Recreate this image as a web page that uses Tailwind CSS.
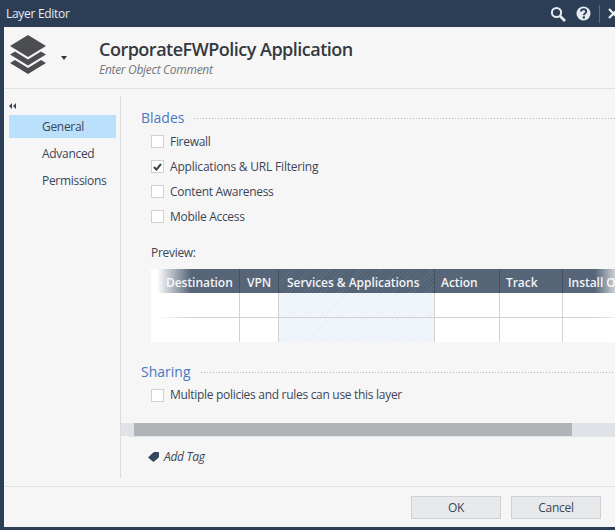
<!DOCTYPE html>
<html lang="en">
<head>
  <meta charset="UTF-8" />
  <title>Layer Editor</title>
  <script src="https://cdn.jsdelivr.net/npm/@tailwindcss/browser@4"></script>
</head>
<body class="w-[615px] h-[530px] overflow-hidden bg-[#2c3e56] font-['Open_Sans','Noto_Sans',sans-serif] text-[12px] tracking-[-0.3px] text-[#3a4656]">
  <!-- title bar -->
  <div class="h-[27px] flex items-center pl-[6px] text-[12px] tracking-[-0.3px] text-[#e8ecf1]">
    <span class="flex-1">Layer Editor</span>
    <svg class="w-[16px] h-[16px] mr-[10px]" viewBox="0 0 16 16" fill="none" stroke="#e6ebf2" stroke-width="2">
      <circle cx="6.5" cy="6.5" r="4.6" /><path d="M10 10l5 5" stroke-width="2.6" />
    </svg>
    <svg class="w-[15px] h-[15px] mr-[8px]" viewBox="0 0 15 15">
      <circle cx="7.5" cy="7.5" r="7" fill="#e6ebf2" />
      <path d="M5 5.6c0-3.2 5.2-3.2 5.2 0 0 2-2.4 1.8-2.4 3.6" fill="none" stroke="#2c3e56" stroke-width="1.9" />
      <rect x="6.7" y="10.3" width="2.2" height="2.2" fill="#2c3e56" />
    </svg>
    <div class="w-px h-[18px] bg-[#5b6b80] mr-[8px]"></div>
    <svg class="w-[7px] h-[11px]" viewBox="0 0 7 11" stroke="#f2f4f7" stroke-width="2.2"><path d="M1 1l9 9M10 1l-9 9" /></svg>
  </div>

  <div class="ml-[4px] h-[500px] bg-[#f6f6f6] flex flex-col">
    <!-- header -->
    <div class="h-[62px] shrink-0 border-b border-[#dfe1e4] flex">
      <svg class="w-[38px] h-[42px] ml-[5px] mt-[7px]" viewBox="0 0 38 42" fill="#4b4d50">
        <path d="M19 1L37 12 19 23 1 12z" />
        <path d="M6 17.5L19 25.5 32 17.5 37 20.5 19 31.5 1 20.5z" />
        <path d="M6 26L19 34 32 26 37 29 19 40 1 29z" />
      </svg>
      <svg class="w-[6px] h-[4px] ml-[14px] mt-[29px]" viewBox="0 0 6 4" fill="#33363a"><path d="M0 0h6L3 4z" /></svg>
      <div class="ml-[32px] mt-[9px]">
        <div class="text-[18px] leading-[26px] font-semibold text-[#33393f] tracking-[-0.5px]">CorporateFWPolicy Application</div>
        <div class="text-[12px] leading-[15px] italic text-[#74777b]">Enter Object Comment</div>
      </div>
    </div>

    <div class="flex h-[397px] shrink-0">
      <!-- side nav -->
      <div class="w-[117px] shrink-0 h-[382px] mt-[7px] border-r border-[#d9dbde] pl-[5px] pr-[4px]">
        <div class="flex h-[19px] items-center gap-px pl-[0px]">
          <svg class="w-[7px] h-[6px]" viewBox="0 0 7 6" fill="#3a4656"><path d="M3 0v6L0 3zM7 0v6L4 3z" /></svg>
        </div>
        <div class="h-[23px] bg-[#bbe0fb] pl-[33px] leading-[23px]">General</div>
        <div class="h-[27px] mt-[2px] pl-[33px] leading-[27px]">Advanced</div>
        <div class="h-[27px] pl-[33px] leading-[27px]">Permissions</div>
      </div>

      <!-- main -->
      <div class="flex-1 min-w-0 flex flex-col">
        <div class="h-[334px] shrink-0 pl-[20px] pt-[19px]">
          <div class="flex items-center h-[18px]">
            <span class="text-[14px] tracking-normal text-[#4a78c2]">Blades</span>
            <div class="flex-1 h-px ml-[10px] mt-[3px] bg-[repeating-linear-gradient(90deg,#a9b7cc_0,#a9b7cc_1px,transparent_1px,transparent_3px)]"></div>
          </div>
          <div class="ml-[10px] mt-[3px] flex flex-col">
            <label class="h-[25px] flex items-center gap-[6px]"><span class="w-[13px] h-[13px] border border-[#cfd1d4] bg-white"></span>Firewall</label>
            <label class="h-[25px] flex items-center gap-[6px] tracking-[-0.2px]"><span class="w-[13px] h-[13px] border border-[#cfd1d4] bg-white flex items-center justify-center">
              <svg class="w-[9px] h-[8px]" viewBox="0 0 9 8" fill="none" stroke="#3a4656" stroke-width="2"><path d="M1 4l2.4 2.6L8 1" /></svg></span>Applications &amp; URL Filtering</label>
            <label class="h-[25px] flex items-center gap-[6px]"><span class="w-[13px] h-[13px] border border-[#cfd1d4] bg-white"></span>Content Awareness</label>
            <label class="h-[25px] flex items-center gap-[6px]"><span class="w-[13px] h-[13px] border border-[#cfd1d4] bg-white"></span>Mobile Access</label>
          </div>
          <div class="ml-[10px] mt-[15px] h-[18px] leading-[18px]">Preview:</div>

          <!-- preview table -->
          <div class="relative ml-[10px] mt-[7px] w-[464px] h-[73px] bg-white overflow-hidden">
            <div class="flex h-[24px] bg-[#566678] text-[12px] leading-[28px] font-semibold text-[#f2f4f6] tracking-[-0.05px] whitespace-nowrap">
              <div class="w-[89px] shrink-0 pl-[15px] border-r border-[#445364]">Destination</div>
              <div class="w-[39px] shrink-0 pl-[7px] border-r border-[#445364]">VPN</div>
              <div class="w-[156px] shrink-0 pl-[8px] border-r border-[#445364] bg-[repeating-linear-gradient(135deg,#5d6d80_0,#5d6d80_1px,#526274_1px,#526274_3px)]">Services &amp; Applications</div>
              <div class="w-[65px] shrink-0 pl-[6px] border-r border-[#445364]">Action</div>
              <div class="w-[63px] shrink-0 pl-[6px] border-r border-[#445364]">Track</div>
              <div class="w-[80px] shrink-0 pl-[5px]">Install On</div>
            </div>
            <div class="flex h-[25px] border-b border-[#d2d2d2]">
              <div class="w-[89px] border-r border-[#d2d2d2]"></div>
              <div class="w-[39px] border-r border-[#d2d2d2]"></div>
              <div class="w-[156px] border-r border-[#d2d2d2] bg-[repeating-linear-gradient(135deg,#e8f0f9_0,#e8f0f9_1px,#f2f6fb_1px,#f2f6fb_3px)]"></div>
              <div class="w-[65px] border-r border-[#d2d2d2]"></div>
              <div class="w-[63px] border-r border-[#d2d2d2]"></div>
            </div>
            <div class="flex h-[24px]">
              <div class="w-[89px] border-r border-[#d2d2d2]"></div>
              <div class="w-[39px] border-r border-[#d2d2d2]"></div>
              <div class="w-[156px] border-r border-[#d2d2d2] bg-[repeating-linear-gradient(135deg,#e8f0f9_0,#e8f0f9_1px,#f2f6fb_1px,#f2f6fb_3px)]"></div>
              <div class="w-[65px] border-r border-[#d2d2d2]"></div>
              <div class="w-[63px] border-r border-[#d2d2d2]"></div>
            </div>
            <!-- edge fades -->
            <div class="absolute left-0 top-0 bottom-0 w-[40px] bg-gradient-to-r from-white from-15% to-transparent"></div>
            <div class="absolute right-0 top-0 bottom-0 w-[20px] bg-gradient-to-l from-white/70 to-transparent"></div>
          </div>

          <div class="flex items-center h-[18px] mt-[20px]">
            <span class="text-[14px] tracking-normal text-[#4a78c2]">Sharing</span>
            <div class="flex-1 h-px ml-[10px] mt-[3px] bg-[repeating-linear-gradient(90deg,#b5b8bd_0,#b5b8bd_1px,transparent_1px,transparent_3px)]"></div>
          </div>
          <label class="ml-[10px] mt-[5px] h-[20px] flex items-center gap-[6px]"><span class="w-[13px] h-[13px] border border-[#cfd1d4] bg-white"></span>Multiple policies and rules can use this layer</label>
        </div>

        <!-- scrollbar -->
        <div class="h-[13px] shrink-0 bg-[#dfe2e6] pl-[13px] mr-0">
          <div class="w-[438px] h-[13px] bg-[#b1b4b6]"></div>
        </div>
        <div class="h-px shrink-0 ml-[7px] mr-0 bg-[#e3e4e6]"></div>

        <div class="flex items-center h-[18px] mt-[11px] ml-[27px] gap-[5px] italic text-[#3a4656]">
          <svg class="w-[11px] h-[10px]" viewBox="0 0 11 10" fill="#33465c"><path d="M0 5.5L5 .8C5.5.3 6 0 6.6 0H10c.6 0 1 .4 1 1v3.4c0 .6-.3 1.1-.8 1.6L5.5 10z" /></svg>
          Add Tag
        </div>
      </div>
    </div>

    <!-- footer -->
    <div class="h-[41px] shrink-0 border-t border-[#dfe1e4] flex justify-end gap-[10px] pt-[9px] pr-[14px]">
      <button class="w-[90px] h-[23px] bg-[#e8e9ea] border border-[#cfd2d6] text-[12px] leading-[21px] text-[#3a4656]">OK</button>
      <button class="w-[90px] h-[23px] bg-[#e8e9ea] border border-[#cfd2d6] text-[12px] leading-[21px] text-[#3a4656]">Cancel</button>
    </div>
  </div>
</body>
</html>
